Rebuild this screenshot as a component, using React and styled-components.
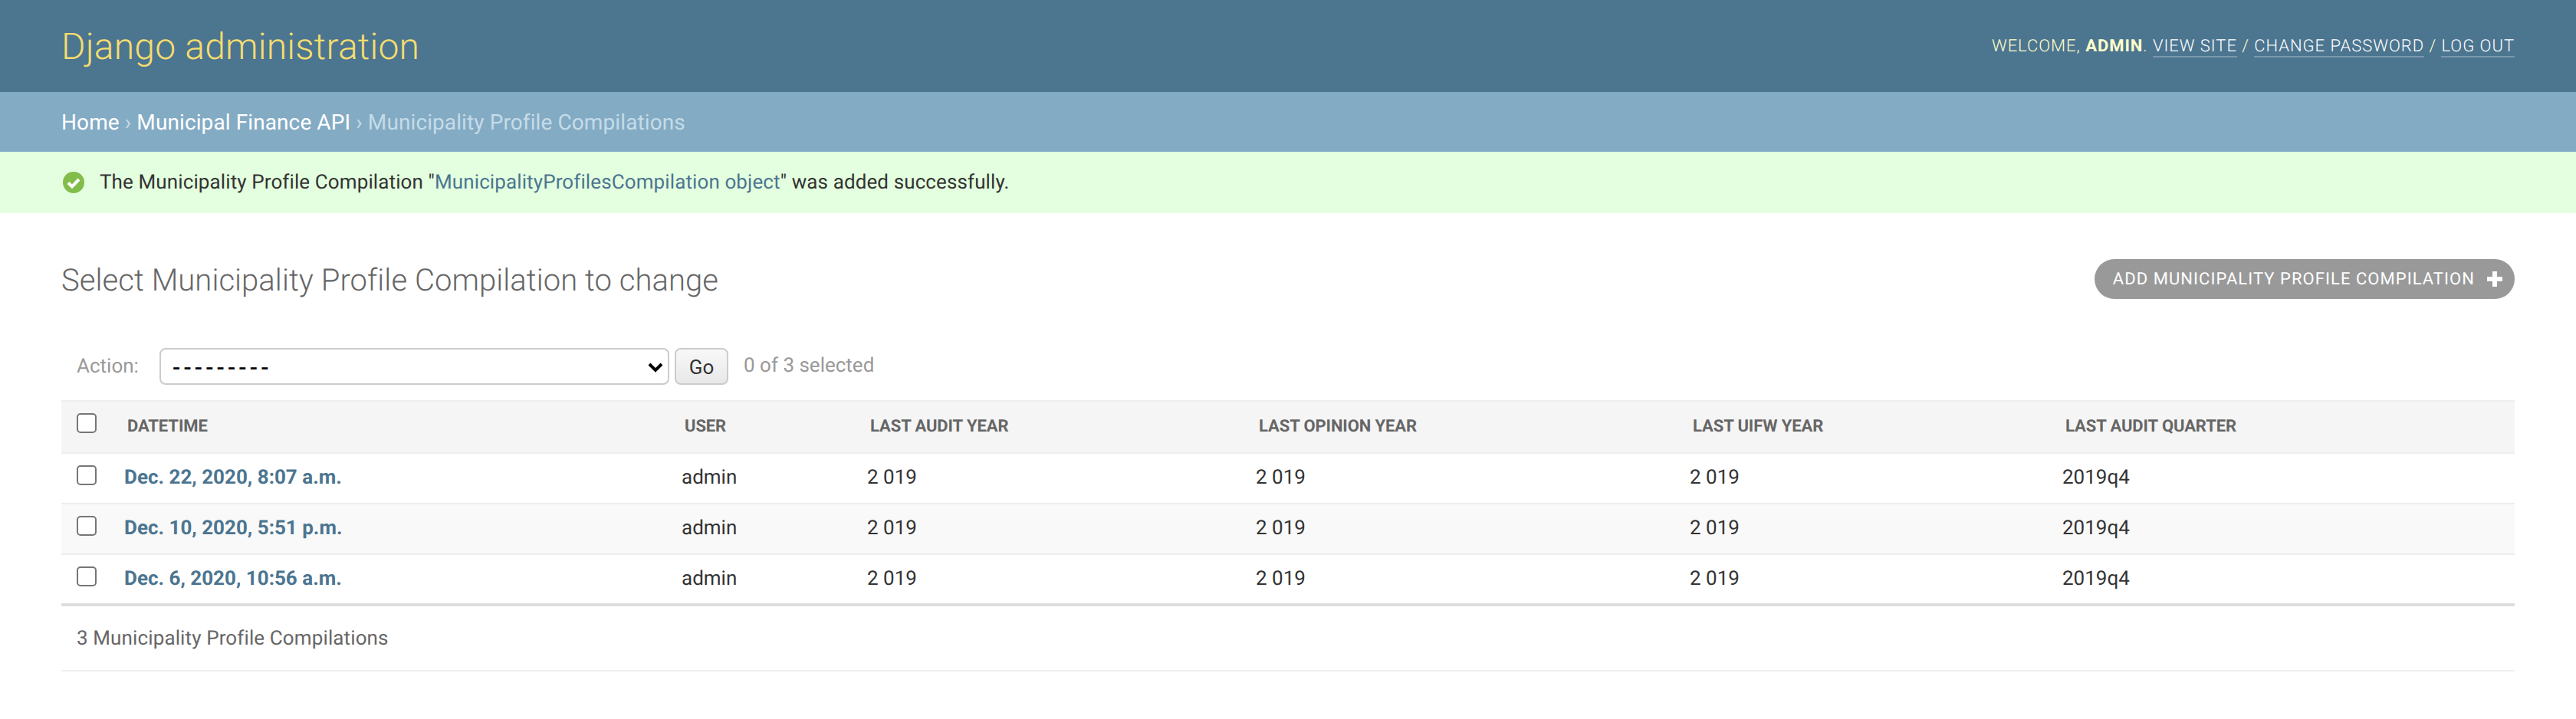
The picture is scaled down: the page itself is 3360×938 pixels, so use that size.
import React from 'react';
import styled, { createGlobalStyle } from 'styled-components';

const GlobalStyle = createGlobalStyle`
html, body {
  margin: 0;
  padding: 0;
  background: #fff;
}
body {
  font-family: Roboto, "Liberation Sans", sans-serif;
  font-size: 28px;
  color: #333;
  text-rendering: geometricPrecision;
}
`;

const Header = styled.header`
display: flex;
align-items: center;
justify-content: space-between;
height: 120px;
padding: 0 80px;
box-sizing: border-box;
background: #4c7590;
`;

const Branding = styled.h1`
margin: 2px 0 0;
font-size: 48px;
font-weight: 300;
line-height: 60px;
letter-spacing: 0.2px;
color: #f5dd6e;
`;

const UserTools = styled.div`
margin-top: 2px;
font-size: 22px;
line-height: 28px;
letter-spacing: 0.97px;
text-transform: uppercase;
font-weight: 300;
color: #ffc;
strong { font-weight: 700; }
`;

const ToolLink = styled.a`
color: #fff;
text-decoration: none;
border-bottom: 2px solid rgba(255, 255, 255, 0.25);
`;

const Breadcrumbs = styled.div`
display: flex;
align-items: center;
height: 78px;
padding: 0 80px;
background: #84abc4;
font-size: 28px;
font-weight: 400;
letter-spacing: 0.1px;
color: #c4dce8;
white-space: pre;
`;

const Crumb = styled.a`
color: #fff;
font-weight: 400;
text-decoration: none;
`;

const Message = styled.div`
display: flex;
align-items: center;
gap: 20px;
height: 80px;
padding: 0 80px 0 82px;
background: #e3ffdf;
font-size: 26px;
letter-spacing: 0.11px;
white-space: pre;
svg { flex: none; }
`;

const TextLink = styled.a`
color: #4c7590;
font-weight: ${({ $bold }) => ($bold ? 700 : 400)};
text-decoration: none;
`;

const Content = styled.main`
padding: 60px 80px 0;
`;

const TitleRow = styled.div`
display: flex;
align-items: center;
justify-content: space-between;
height: 52px;
`;

const Title = styled.h2`
margin: 3px 0 0;
font-size: 40px;
font-weight: 300;
line-height: 52px;
letter-spacing: 0.05px;
color: #666;
`;

const AddButton = styled.a`
display: flex;
align-items: center;
gap: 16px;
height: 52px;
padding: 0 16px 0 24px;
box-sizing: border-box;
border-radius: 30px;
background: #999;
color: #fff;
font-size: 22px;
letter-spacing: 1.05px;
text-transform: uppercase;
white-space: nowrap;
`;

const Actions = styled.div`
display: flex;
align-items: center;
height: 48px;
margin-top: 64px;
padding-left: 20px;
font-size: 26px;
color: #999;
`;

const ActionLabel = styled.label`
width: 108px;
`;

const SelectWrap = styled.div`
position: relative;
width: 665px;
height: 48px;
`;

const ActionSelect = styled.select`
appearance: none;
width: 100%;
height: 100%;
padding: 2px 15px 0;
box-sizing: border-box;
border: 2px solid #ccc;
border-radius: 8px;
background: #fff;
color: #000;
font-family: Roboto, "Liberation Sans", sans-serif;
font-size: 30px;
font-weight: 500;
letter-spacing: 4.2px;
`;

const Chevron = styled.svg`
position: absolute;
right: 8px;
top: 19px;
pointer-events: none;
`;

const GoButton = styled.button`
width: 70px;
height: 48px;
margin: 0 20px 0 7px;
padding: 2px 0 0;
border: 2px solid #ccc;
border-radius: 8px;
background: linear-gradient(#f8f8f8, #e8e8e8);
color: #333;
font-family: Roboto, "Liberation Sans", sans-serif;
font-size: 26px;
`;

const Selected = styled.span`
margin-top: -3px;
`;

const Table = styled.table`
width: 3200px;
margin-top: 20px;
border-collapse: collapse;
table-layout: fixed;
border-bottom: 4px solid #ddd;
`;

const HeadCell = styled.th`
height: 68px;
padding: 0 0 2px 20px;
box-sizing: border-box;
background: #f5f5f5;
border-top: 2px solid #eee;
border-bottom: 2px solid #eee;
color: #666;
font-size: 22px;
font-weight: 700;
letter-spacing: -0.1px;
text-align: left;
text-transform: uppercase;
white-space: nowrap;
`;

const Row = styled.tr`
background: ${({ $even }) => ($even ? '#f9f9f9' : '#fff')};
`;

const Cell = styled.td`
height: 66px;
padding: 0 0 2px 16px;
box-sizing: border-box;
border-bottom: 2px solid #eee;
font-size: 26px;
white-space: nowrap;
`;

const CheckCell = styled(Cell)`
padding: 0 0 0 20px;
vertical-align: top;
`;

const CheckHead = styled(HeadCell)`
vertical-align: top;
`;

const Check = styled.input`
appearance: none;
display: block;
width: 26px;
height: 26px;
margin: 15px 0 0;
box-sizing: border-box;
border: 2px solid #767676;
border-radius: 5px;
background: #fff;
`;

const Paginator = styled.p`
display: flex;
align-items: center;
height: 83px;
margin: 0;
padding-left: 20px;
border-bottom: 2px solid #eee;
color: #666;
font-size: 26px;
letter-spacing: 0.12px;
`;

const columns = [
  { label: 'Datetime', width: 727 },
  { label: 'User', width: 242 },
  { label: 'Last audit year', width: 507 },
  { label: 'Last opinion year', width: 566 },
  { label: 'Last UIFW year', width: 486 },
  { label: 'Last audit quarter', width: 606 },
];

const rows = [
  'Dec. 22, 2020, 8:07 a.m.',
  'Dec. 10, 2020, 5:51 p.m.',
  'Dec. 6, 2020, 10:56 a.m.',
];

const App = () => (
  <>
    <GlobalStyle />
    <Header>
      <Branding>Django administration</Branding>
      <UserTools>
        Welcome, <strong>admin</strong>. <ToolLink>View site</ToolLink> / <ToolLink>Change password</ToolLink> / <ToolLink>Log out</ToolLink>
      </UserTools>
    </Header>
    <Breadcrumbs>
      <Crumb>Home</Crumb> › <Crumb>Municipal Finance API</Crumb> › Municipality Profile Compilations
    </Breadcrumbs>
    <Message>
      <svg width="28" height="28" viewBox="0 0 28 28">
        <circle cx="14" cy="14" r="14" fill="#82bc4a" />
        <path d="M7 14.5l5 5 9-9.5" fill="none" stroke="#fff" strokeWidth="4" />
      </svg>
      <span>The Municipality Profile Compilation "<TextLink>MunicipalityProfilesCompilation object</TextLink>" was added successfully.</span>
    </Message>
    <Content>
      <TitleRow>
        <Title>Select Municipality Profile Compilation to change</Title>
        <AddButton>
          Add Municipality Profile Compilation
          <svg width="20" height="20" viewBox="0 0 20 20">
            <path d="M7 0h6v7h7v6h-7v7H7v-7H0V7h7z" fill="#fff" />
          </svg>
        </AddButton>
      </TitleRow>
      <Actions>
        <ActionLabel>Action:</ActionLabel>
        <SelectWrap>
          <ActionSelect defaultValue="">
            <option value="">---------</option>
          </ActionSelect>
          <Chevron width="20" height="14" viewBox="0 0 20 14">
            <path d="M2 2l8 8 8-8" fill="none" stroke="#000" strokeWidth="4" />
          </Chevron>
        </SelectWrap>
        <GoButton>Go</GoButton>
        <Selected>0 of 3 selected</Selected>
      </Actions>
      <Table>
        <colgroup>
          <col style={{ width: 66 }} />
          {columns.map(col => <col key={col.label} style={{ width: col.width }} />)}
        </colgroup>
        <thead>
          <tr>
            <CheckHead><Check type="checkbox" /></CheckHead>
            {columns.map(col => <HeadCell key={col.label}>{col.label}</HeadCell>)}
          </tr>
        </thead>
        <tbody>
          {rows.map((date, i) => (
            <Row key={date} $even={i === 1}>
              <CheckCell><Check type="checkbox" /></CheckCell>
              <Cell><TextLink $bold>{date}</TextLink></Cell>
              <Cell>admin</Cell>
              <Cell>2 019</Cell>
              <Cell>2 019</Cell>
              <Cell>2 019</Cell>
              <Cell>2019q4</Cell>
            </Row>
          ))}
        </tbody>
      </Table>
      <Paginator>3 Municipality Profile Compilations</Paginator>
    </Content>
  </>
);

export default App;
